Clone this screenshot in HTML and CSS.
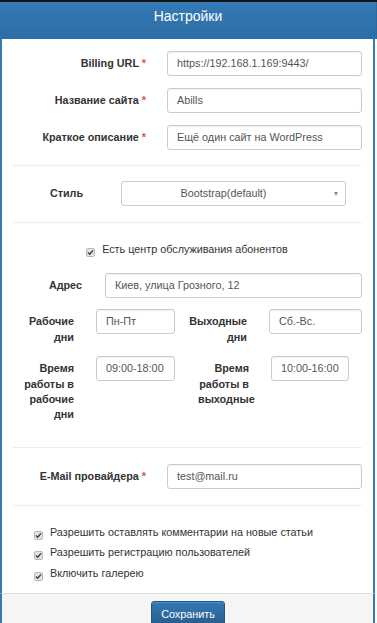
FILE: index.html
```html
<!DOCTYPE html>
<html lang="ru">
<head>
<meta charset="utf-8">
<title>Настройки</title>
<link rel="stylesheet" href="styles.css">
</head>
<body>
<div class="topbar"></div>
<div class="panel">
  <div class="panel-heading">Настройки</div>
  <div class="panel-body">
    <div class="row row-main first">
      <div class="lbl lbl-main">Billing URL <span class="req">*</span></div>
      <div class="control">https://192.168.1.169:9443/</div>
    </div>
    <div class="row row-main">
      <div class="lbl lbl-main">Название сайта <span class="req">*</span></div>
      <div class="control">Abills</div>
    </div>
    <div class="row row-main">
      <div class="lbl lbl-main">Краткое описание <span class="req">*</span></div>
      <div class="control">Ещё один сайт на WordPress</div>
    </div>
    <div class="divider d1"></div>
    <div class="row row-style">
      <div class="lbl lbl-style">Стиль</div>
      <div class="control select">
        <span class="select-text">Bootstrap(default)</span>
        <span class="caret"></span>
      </div>
    </div>
    <div class="divider d2"></div>
    <div class="check-line centered">
      <svg class="cb" width="9" height="9" viewBox="0 0 9 9"><rect x="0.5" y="0.5" width="8" height="8" rx="1.5" fill="#e4e4e4" stroke="#b8b8b8"/><path d="M2 4.6 L3.7 6.3 L7 2.4" fill="none" stroke="#3a3a3a" stroke-width="1.4"/></svg>
      <span class="check-text">Есть центр обслуживания абонентов</span>
    </div>
    <div class="row row-addr">
      <div class="lbl lbl-addr">Адрес</div>
      <div class="control">Киев, улица Грозного, 12</div>
    </div>
    <div class="row row-days">
      <div class="lbl lbl-a">Рабочие дни</div>
      <div class="control c-a">Пн-Пт</div>
      <div class="lbl lbl-b">Выходные дни</div>
      <div class="control c-b">Сб.-Вс.</div>
    </div>
    <div class="row row-time">
      <div class="lbl lbl-a">Время работы в рабочие дни</div>
      <div class="control c-a">09:00-18:00</div>
      <div class="lbl lbl-c">Время работы в выходные</div>
      <div class="control c-c">10:00-16:00</div>
    </div>
    <div class="divider d3"></div>
    <div class="row row-main email">
      <div class="lbl lbl-main">E-Mail провайдера <span class="req">*</span></div>
      <div class="control">test@mail.ru</div>
    </div>
    <div class="divider d4"></div>
    <div class="checks">
      <div class="check-line">
        <svg class="cb" width="9" height="9" viewBox="0 0 9 9"><rect x="0.5" y="0.5" width="8" height="8" rx="1.5" fill="#e4e4e4" stroke="#b8b8b8"/><path d="M2 4.6 L3.7 6.3 L7 2.4" fill="none" stroke="#3a3a3a" stroke-width="1.4"/></svg>
        <span class="check-text">Разрешить оставлять комментарии на новые статьи</span>
      </div>
      <div class="check-line">
        <svg class="cb" width="9" height="9" viewBox="0 0 9 9"><rect x="0.5" y="0.5" width="8" height="8" rx="1.5" fill="#e4e4e4" stroke="#b8b8b8"/><path d="M2 4.6 L3.7 6.3 L7 2.4" fill="none" stroke="#3a3a3a" stroke-width="1.4"/></svg>
        <span class="check-text">Разрешить регистрацию пользователей</span>
      </div>
      <div class="check-line">
        <svg class="cb" width="9" height="9" viewBox="0 0 9 9"><rect x="0.5" y="0.5" width="8" height="8" rx="1.5" fill="#e4e4e4" stroke="#b8b8b8"/><path d="M2 4.6 L3.7 6.3 L7 2.4" fill="none" stroke="#3a3a3a" stroke-width="1.4"/></svg>
        <span class="check-text">Включить галерею</span>
      </div>
    </div>
  </div>
  <div class="panel-footer">
    <button class="btn" type="button">Сохранить</button>
  </div>
</div>
</body>
</html>
```
FILE: styles.css
```css
html, body {
  margin: 0;
  padding: 0;
  background: #fff;
}
body {
  width: 377px;
  height: 623px;
  overflow: hidden;
  font-family: "Liberation Sans", Arial, sans-serif;
  font-size: 10.8px;
  line-height: 15.4px;
  color: #333;
}
.topbar {
  height: 2px;
  background: #151515;
}
.panel {
  display: flex;
  flex-direction: column;
}
.panel-heading {
  height: 37px;
  box-sizing: border-box;
  padding-top: 5px;
  text-align: center;
  color: #fff;
  font-size: 14px;
  line-height: 18px;
  background: linear-gradient(#337ab7, #2e6da4);
  border-right: 1px solid #2d6aa0;
}
.panel-body,
.panel-footer {
  border-left: 2px solid #337ab7;
  border-right: 2px solid #337ab7;
  margin-right: 2px;
}
.panel-body {
  display: flex;
  flex-direction: column;
  padding: 12px 11px 12px 10px;
}
.row {
  display: flex;
  align-items: flex-start;
  margin-top: 12px;
}
.row.first {
  margin-top: 0;
}
.lbl {
  font-weight: bold;
  color: #333;
  box-sizing: border-box;
  flex: none;
}
.req {
  color: #d9534f;
}
.control {
  box-sizing: border-box;
  height: 25px;
  border: 1px solid #ccc;
  border-radius: 3px;
  padding: 4px 9px;
  line-height: 15.4px;
  color: #555;
  background: #fff;
  box-shadow: inset 0 1px 1px rgba(0,0,0,0.06);
  white-space: nowrap;
  overflow: hidden;
}
.row-main .lbl-main {
  width: 136px;
  padding-top: 5px;
  padding-right: 2px;
  text-align: right;
}
.row-main .control {
  margin-left: 19px;
  flex: 1;
}
.divider {
  height: 1px;
  background: #eee;
}
.d1 { margin-top: 15px; }
.d2 { margin-top: 16px; }
.d3 { margin-top: 24px; }
.d4 { margin-top: 16px; }
.row-style {
  margin-top: 15px;
}
.lbl-style {
  width: 109px;
  text-align: center;
  padding-top: 5px;
}
.select {
  flex: 1;
  margin-right: 16px;
  display: flex;
  align-items: center;
  padding-right: 7px;
  box-shadow: none;
}
.select-text {
  flex: 1;
  text-align: center;
  padding-right: 18px;
}
.caret {
  width: 0;
  height: 0;
  border-left: 2.5px solid transparent;
  border-right: 2.5px solid transparent;
  border-top: 4px solid #8a8a8a;
}
.check-line {
  display: flex;
  align-items: flex-start;
}
.check-line.centered {
  justify-content: center;
  margin-top: 19px;
}
.cb {
  flex: none;
  margin-top: 6px;
  margin-right: 7px;
}
.check-text {
  color: #333;
}
.row-addr {
  margin-top: 16px;
}
.lbl-addr {
  width: 70px;
  text-align: right;
  padding-top: 5px;
}
.row-addr .control {
  margin-left: 23px;
  flex: 1;
}
.row-days,
.row-time {
  margin-top: 11px;
}
.lbl-a {
  width: 62px;
  text-align: right;
  padding-top: 5px;
}
.c-a {
  width: 79px;
  margin-left: 22px;
}
.lbl-b {
  width: 72px;
  text-align: right;
  padding-top: 5px;
}
.c-b {
  flex: 1;
  margin-left: 22px;
}
.lbl-c {
  width: 51px;
  margin-left: 23px;
  text-align: right;
  padding-top: 5px;
}
.c-c {
  width: 78px;
  margin-left: 22px;
}
.email {
  margin-top: 16px;
}
.checks {
  display: flex;
  flex-direction: column;
  gap: 5px;
  margin-top: 19px;
  padding-left: 22px;
}
.checks .cb {
  margin-top: 6px;
}
.panel-footer {
  background: #f5f5f5;
  border-top: 1px solid #ddd;
  padding-top: 7px;
  height: 40px;
  display: flex;
  justify-content: center;
  align-items: flex-start;
}
.btn {
  font-family: "Liberation Sans", Arial, sans-serif;
  font-size: 10.8px;
  line-height: 15.4px;
  color: #fff;
  padding: 5px 9px;
  border: 1px solid #245580;
  border-radius: 3px;
  background: linear-gradient(#337ab7, #265a88);
  box-shadow: inset 0 1px 0 rgba(255,255,255,0.15);
  margin-left: 1px;
}
```
